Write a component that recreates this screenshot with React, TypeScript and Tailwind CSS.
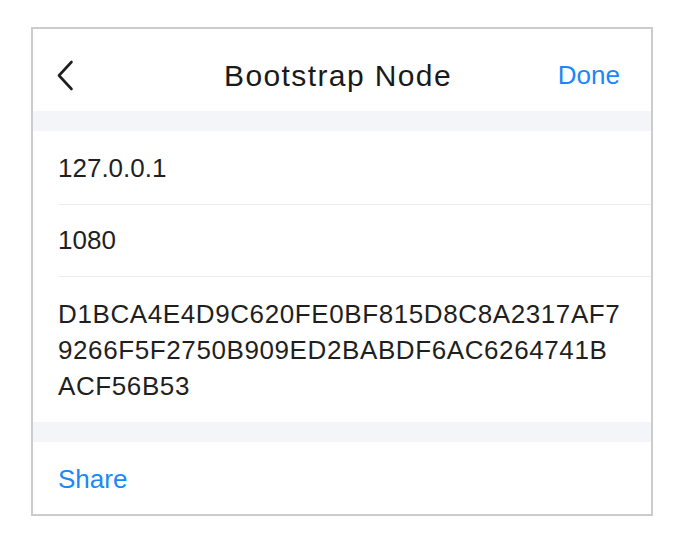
import React from "react";

function Chevron() {
  return (
    <svg width="18" height="31" viewBox="0 0 18 31" fill="none">
      <path d="M15.5 2 L3 15.5 L15.5 29" stroke="#1f1f1f" strokeWidth="2.6" strokeLinecap="round" strokeLinejoin="round" />
    </svg>
  );
}

export default function App() {
  const font = { fontFamily: '"Liberation Sans", Arial, sans-serif' };
  return (
    <div className="w-[686px] h-[544px] bg-white pt-[27px] pl-[31px]" style={font}>
      <div className="w-[622px] h-[489px] border-2 border-[#cccccc] bg-white flex flex-col text-[#1f1f1f]">
        <div className="h-[82px] shrink-0 grid grid-cols-[1fr_auto_1fr] items-center pt-[10px] pl-[23px] pr-[31px]">
          <div className="flex items-center">
            <Chevron />
          </div>
          <div className="text-[30px] tracking-[1.4px] text-[#1a1a1a]">Bootstrap Node</div>
          <div className="flex justify-end text-[26px] text-[#1a88f8]">Done</div>
        </div>
        <div className="h-[20px] shrink-0 bg-[#f4f5f9]" />
        <div className="h-[73px] shrink-0 flex items-center pt-[2px] pl-[25px] text-[26px]">127.0.0.1</div>
        <div className="h-px shrink-0 ml-[25px] bg-[#ececf1]" />
        <div className="h-[71px] shrink-0 flex items-center pl-[25px] text-[26px]">1080</div>
        <div className="h-px shrink-0 ml-[25px] bg-[#ececf1]" />
        <div className="h-[145px] shrink-0 flex flex-col justify-center pl-[25px] text-[26px] leading-[36px] tracking-[0.6px]">
          <span>D1BCA4E4D9C620FE0BF815D8C8A2317AF7</span>
          <span>9266F5F2750B909ED2BABDF6AC6264741B</span>
          <span>ACF56B53</span>
        </div>
        <div className="h-[20px] shrink-0 bg-[#f4f5f9]" />
        <div className="h-[72px] shrink-0 flex items-center pt-[2px] pl-[25px] text-[26px] text-[#1a88f8]">Share</div>
      </div>
    </div>
  );
}
